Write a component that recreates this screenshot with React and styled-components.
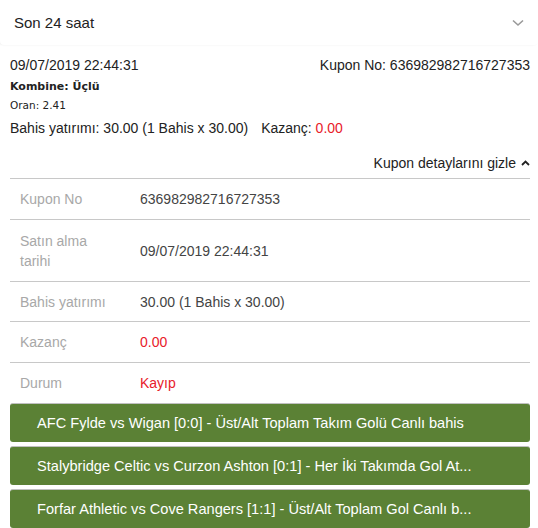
import React from "react";
import styled, { createGlobalStyle } from "styled-components";

const GlobalStyle = createGlobalStyle`
  body {
    margin: 0;
    background: #fff;
    font-family: "Liberation Sans", Arial, sans-serif;
    color: #222;
  }
`;

const details = [
  { label: "Kupon No", value: "636982982716727353", height: 41 },
  { label: "Satın alma tarihi", value: "09/07/2019 22:44:31", height: 62 },
  { label: "Bahis yatırımı", value: "30.00 (1 Bahis x 30.00)", height: 40 },
  { label: "Kazanç", value: "0.00", height: 41, red: true },
  { label: "Durum", value: "Kayıp", height: 41, red: true },
];

// titles are cut in the list, as the site shows them
const events = [
  "AFC Fylde vs Wigan [0:0] - Üst/Alt Toplam Takım Golü Canlı bahis",
  "Stalybridge Celtic vs Curzon Ashton [0:1] - Her İki Takımda Gol At...",
  "Forfar Athletic vs Cove Rangers [1:1] - Üst/Alt Toplam Gol Canlı b...",
];

function App() {
  return (
    <Page>
      <GlobalStyle />
      <Header>
        <HeaderTitle>Son 24 saat</HeaderTitle>
        <svg width="12" height="8" viewBox="0 0 12 8">
          <path d="M1 1.5 L6 6 L11 1.5" fill="none" stroke="#999" strokeWidth="1.6" />
        </svg>
      </Header>
      <Info>
        <InfoRow>
          <span>09/07/2019 22:44:31</span>
          <span>Kupon No: 636982982716727353</span>
        </InfoRow>
        <Kombine>Kombine: Üçlü</Kombine>
        <Oran>Oran: 2.41</Oran>
        <Stake>
          Bahis yatırımı: 30.00 (1 Bahis x 30.00)
          <Gain>
            Kazanç: <Red>0.00</Red>
          </Gain>
        </Stake>
        <Toggle>
          Kupon detaylarını gizle
          <svg width="9" height="6" viewBox="0 0 9 6">
            <path d="M1 5 L4.5 1.6 L8 5" fill="none" stroke="#222" strokeWidth="1.8" />
          </svg>
        </Toggle>
      </Info>
      <Table>
        {details.map((d) => (
          <DetailRow key={d.label} $h={d.height}>
            <Label>{d.label}</Label>
            <Value $red={d.red}>{d.value}</Value>
          </DetailRow>
        ))}
      </Table>
      <Events>
        {events.map((e) => (
          <EventBar key={e}>
            <EventText>{e}</EventText>
          </EventBar>
        ))}
      </Events>
    </Page>
  );
}

export default App;

const Page = styled.div`
  width: 538px;
  height: 528px;
  overflow: hidden;
`;

const Header = styled.div`
  display: flex;
  align-items: center;
  justify-content: space-between;
  height: 45px;
  padding: 0 14px;
  border-radius: 0 0 4px 4px;
  box-shadow: -1px 0 2px rgba(0, 0, 0, 0.08);
  box-sizing: border-box;
`;

const HeaderTitle = styled.span`
  font-size: 15px;
  color: #222;
`;

const Info = styled.div`
  padding: 11px 8px 0 10px;
  font-size: 14px;
`;

const InfoRow = styled.div`
  display: flex;
  justify-content: space-between;
  height: 19px;
  line-height: 19px;
`;

const Kombine = styled.div`
  margin-top: 3px;
  font-family: "DejaVu Sans", Tahoma, sans-serif;
  font-size: 11px;
  font-weight: bold;
  line-height: 18px;
`;

const Oran = styled.div`
  font-family: "DejaVu Sans", Tahoma, sans-serif;
  font-size: 10.5px;
  line-height: 18px;
`;

const Stake = styled.div`
  margin-top: 4px;
  line-height: 20px;
`;

const Gain = styled.span`
  margin-left: 13px;
`;

const Red = styled.span`
  color: #e8202a;
`;

const Toggle = styled.div`
  display: flex;
  align-items: center;
  justify-content: flex-end;
  gap: 5px;
  margin-top: 15px;
  height: 20px;
`;

const Table = styled.div`
  margin: 5px 8px 0 10px;
`;

const DetailRow = styled.div`
  display: grid;
  grid-template-columns: 130px 1fr;
  align-items: center;
  height: ${(p) => p.$h}px;
  border-top: 1px solid #c8c8c8;
  box-sizing: border-box;
  font-size: 14px;
`;

const Label = styled.div`
  color: #a8a8a8;
  padding-left: 10px;
  width: 96px;
  line-height: 20px;
`;

const Value = styled.div`
  color: ${(p) => (p.$red ? "#e8202a" : "#444")};
`;

const Events = styled.div`
  display: flex;
  flex-direction: column;
  gap: 4px;
  margin: 0 8px 0 10px;
`;

const EventBar = styled.div`
  display: flex;
  align-items: center;
  height: 39px;
  padding: 0 27px;
  background: #5b8135;
  border-radius: 3px;
  border-top: 1px solid #c0c0c0;
  box-sizing: border-box;
`;

const EventText = styled.span`
  color: #fff;
  font-size: 14.6px;
  white-space: nowrap;
`;
